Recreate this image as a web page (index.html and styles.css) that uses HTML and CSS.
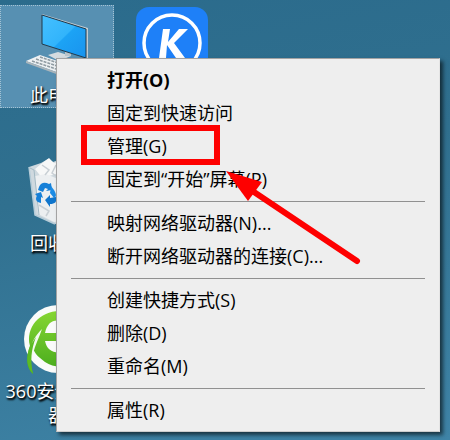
FILE: index.html
```html
<!DOCTYPE html>
<html lang="zh-CN">
<head>
  <meta charset="UTF-8">
  <meta name="viewport" content="width=device-width, initial-scale=1.0">
  <title>此电脑 - 管理</title>
  <link rel="stylesheet" href="styles.css">
</head>

<body>

  <main class="desktop">
    <div class="shortcuts">
      <a href="#" class="shortcut selected">
        <svg class="icon" viewBox="0 0 72 72" aria-hidden="true">
          <defs>
            <linearGradient id="screen" x1="0" y1="0" x2="1" y2="1">
              <stop offset="0" stop-color="#45c0ff"/>
              <stop offset="0.5" stop-color="#32b4fb"/>
              <stop offset="0.52" stop-color="#1ca3f5"/>
              <stop offset="1" stop-color="#1993ee"/>
            </linearGradient>
          </defs>
          <path d="M27 48 L37 45 L50 49 L38 54 Z" fill="#d5dce0"/>
          <path d="M44 42 L50 44 V49 H44 Z" fill="#b9c4ca"/>
          <path d="M21 7 L67 21 V52 L65 51 L21 37 Z" fill="#c3cdd3"/>
          <path d="M21 8 L65 22 V51 L21 37 Z" fill="url(#screen)" stroke="#20384a" stroke-width="1"/>
          <path d="M5 54 L19 48 L54 60 L38 66 Z" fill="#eef1f3"/>
          <path d="M5 54 L38 66 V68 L5 56 Z" fill="#aab5bb"/>
          <path d="M11 54 L41 64 M15 52 L45 62 M19 50 L49 60" stroke="#8f9ba2" stroke-width="1.5" stroke-dasharray="3 1" fill="none"/>
        </svg>
        <span class="label">此电脑</span>
      </a>

      <a href="#" class="shortcut" aria-label="K">
        <svg class="icon" viewBox="0 0 72 72" aria-hidden="true">
          <rect width="72" height="72" rx="13" fill="#1e80f8"/>
          <circle cx="36" cy="36" r="28" fill="none" stroke="#fff" stroke-width="3.5"/>
          <path d="M27 22 H34 L32 35 L43 22 H52 L38 36 L49 51 H40 L31 38 L30 51 H23 Z" fill="#fff"/>
        </svg>
      </a>

      <a href="#" class="shortcut">
        <svg class="icon" viewBox="0 0 72 72" aria-hidden="true">
          <path d="M8 12 L20 8 L27 4 L32 7 L43 3 L64 12 L57 66 L34 69 L14 60 Z" fill="#cfd9df"/>
          <path d="M14 14 L20 9 L28 3 L33 8 L44 4 L56 14 L51 22 L35 19 L21 23 Z" fill="#f7f8f8"/>
          <path d="M14 21 L25 19 L37 24 L50 20 L54 64 L33 67 L17 59 Z" fill="#eceff1"/>
          <path d="M21 10 L28 15 L24 20 M35 10 L31 18 L39 24 M18 50 L28 56 L25 61" fill="none" stroke="#c9d0d5" stroke-width="1.5"/>
          <path d="M8 12 L14 60 L34 69" fill="none" stroke="#b5cbd7" stroke-width="1.5"/>
          <path d="M9 13 L13 15 L18 60" fill="none" stroke="#a3b9c4" stroke-width="1"/>
          <path d="M18 32 C20 27 24 27 28 29 L30 28 L31 35 L25 36 L27 34 L24 33 L22 37 L17 35 Z" fill="#1680d8"/>
          <path d="M30 31 L33 35 C36 40 35 42 33 43 L29 38 Z" fill="#1c8ce5"/>
          <path d="M14 39 L20 37 L22 43 L20 42 L20 48 C15 47 14 44 16 41 Z" fill="#1680d8"/>
          <path d="M24 45 L29 40 V43 L35 42 C36 47 34 49 29 49 V52 Z" fill="#0f75cc"/>
        </svg>
        <span class="label">回收站</span>
      </a>

      <a href="#" class="shortcut browser">
        <svg class="icon" viewBox="0 0 72 72" aria-hidden="true">
          <defs>
            <linearGradient id="leaf" x1="0" y1="0" x2="0" y2="1">
              <stop offset="0" stop-color="#86d632"/>
              <stop offset="1" stop-color="#45a91c"/>
            </linearGradient>
          </defs>
          <circle cx="37" cy="36" r="34" fill="#fafbfa"/>
          <path d="M66 38 H24 C26 48 34 52 46 48 L62 48 C55 63 38 68 24 59 C16 53 12 49 12 43 C9 51 9 60 12 71 C5 65 5 54 9 43 C4 24 20 7 40 8 C56 9 66 22 66 38 Z" fill="url(#leaf)"/>
          <path d="M24 30 C26 20 32 16 40 18 C46 20 49 25 49 30 Z" fill="#fafbfa"/>
          <path d="M9 49 C10 39 15 32 21 26 C18 35 14 42 12 51 C10 57 9 61 10 66 C7 60 7 55 9 49 Z" fill="#f4faee"/>
          <path d="M9 43 C11 40 13 37 15 34 C10 47 9 58 12 71 C5 64 5 53 9 43 Z" fill="#5cbb22"/>
        </svg>
        <span class="label">360安全浏览器</span>
      </a>
    </div>

    <!-- Right click menu -->
    <div class="context-menu">
      <button type="button" class="menu-item default">打开(O)</button>
      <button type="button" class="menu-item">固定到快速访问</button>
      <button type="button" class="menu-item marked">管理(G)</button>
      <button type="button" class="menu-item">固定到“开始”屏幕(P)</button>
      <hr>
      <button type="button" class="menu-item">映射网络驱动器(N)...</button>
      <button type="button" class="menu-item">断开网络驱动器的连接(C)...</button>
      <hr>
      <button type="button" class="menu-item">创建快捷方式(S)</button>
      <button type="button" class="menu-item">删除(D)</button>
      <button type="button" class="menu-item">重命名(M)</button>
      <hr>
      <button type="button" class="menu-item">属性(R)</button>

      <svg class="arrow" viewBox="0 0 136 96" aria-hidden="true">
        <path d="M28 21 L131 90" stroke="#fe0000" stroke-width="6" stroke-linecap="round"/>
        <path d="M0 0 L36 11 L22 30 Z" fill="#fe0000"/>
      </svg>
    </div>
  </main>

</body>

</html>
```

FILE: styles.css
```css
/* General Styles */
*,
*::after {
  box-sizing: border-box;
}

body {
  margin: 0;
  font-family: "Open Sans", "Noto Sans CJK SC", sans-serif;
  font-size: 18px;
}

/* Desktop Styles */
.desktop {
  position: relative;
  min-height: 100vh;
  padding: 5px 0;
  background: linear-gradient(170deg, #2b6b8c, #30708f 40%, #3f84a7);
}

.shortcuts {
  display: grid;
  grid-template-columns: repeat(auto-fill, 114px);
  grid-template-rows: 148px 148px auto;
  column-gap: 1px;
  align-items: start;
}

.shortcut {
  grid-column: 1;
  display: flex;
  flex-direction: column;
  align-items: center;
  padding: 1px 0 0;
  border: 1px dotted transparent;
  color: #fff;
  text-decoration: none;
}

.shortcut:nth-child(2) {
  grid-column: 2;
}

.shortcut.selected {
  background-color: #5790b2;
  border-color: #a5c3d4;
}

.icon {
  width: 72px;
  height: 72px;
}

.label {
  padding: 4px 4px 0;
  line-height: 24px;
  text-align: center;
  text-shadow: 1px 1px 2px #000, 1px 2px 2px #000;
}

/* Context Menu Styles */
.context-menu {
  position: absolute;
  top: 58px;
  left: 56px;
  right: 10px;
  padding: 5px 0 4px;
  background-color: #eee;
  border: 1px solid #a3a3a3;
  border-right-color: #e4e4e4;
  border-bottom-color: #ccc;
  box-shadow: 3px 3px 4px rgba(0, 0, 0, 0.6);
}

.menu-item {
  position: relative;
  display: block;
  width: 100%;
  height: 33px;
  padding: 0 50px;
  border: none;
  background: none;
  color: #000;
  font: inherit;
  line-height: 33px;
  text-align: left;
}

.menu-item.default {
  font-weight: bold;
}

.context-menu hr {
  margin: 5px 14px;
  border: none;
  border-top: 1px solid #909090;
}

/* Red marks over the menu */
.marked::after {
  content: "";
  position: absolute;
  top: -5px;
  left: 24px;
  width: 139px;
  height: 40px;
  border: 6px solid #fe0000;
}

.arrow {
  position: absolute;
  top: 112px;
  left: 169px;
  width: 136px;
  height: 96px;
  fill: none;
}
```
